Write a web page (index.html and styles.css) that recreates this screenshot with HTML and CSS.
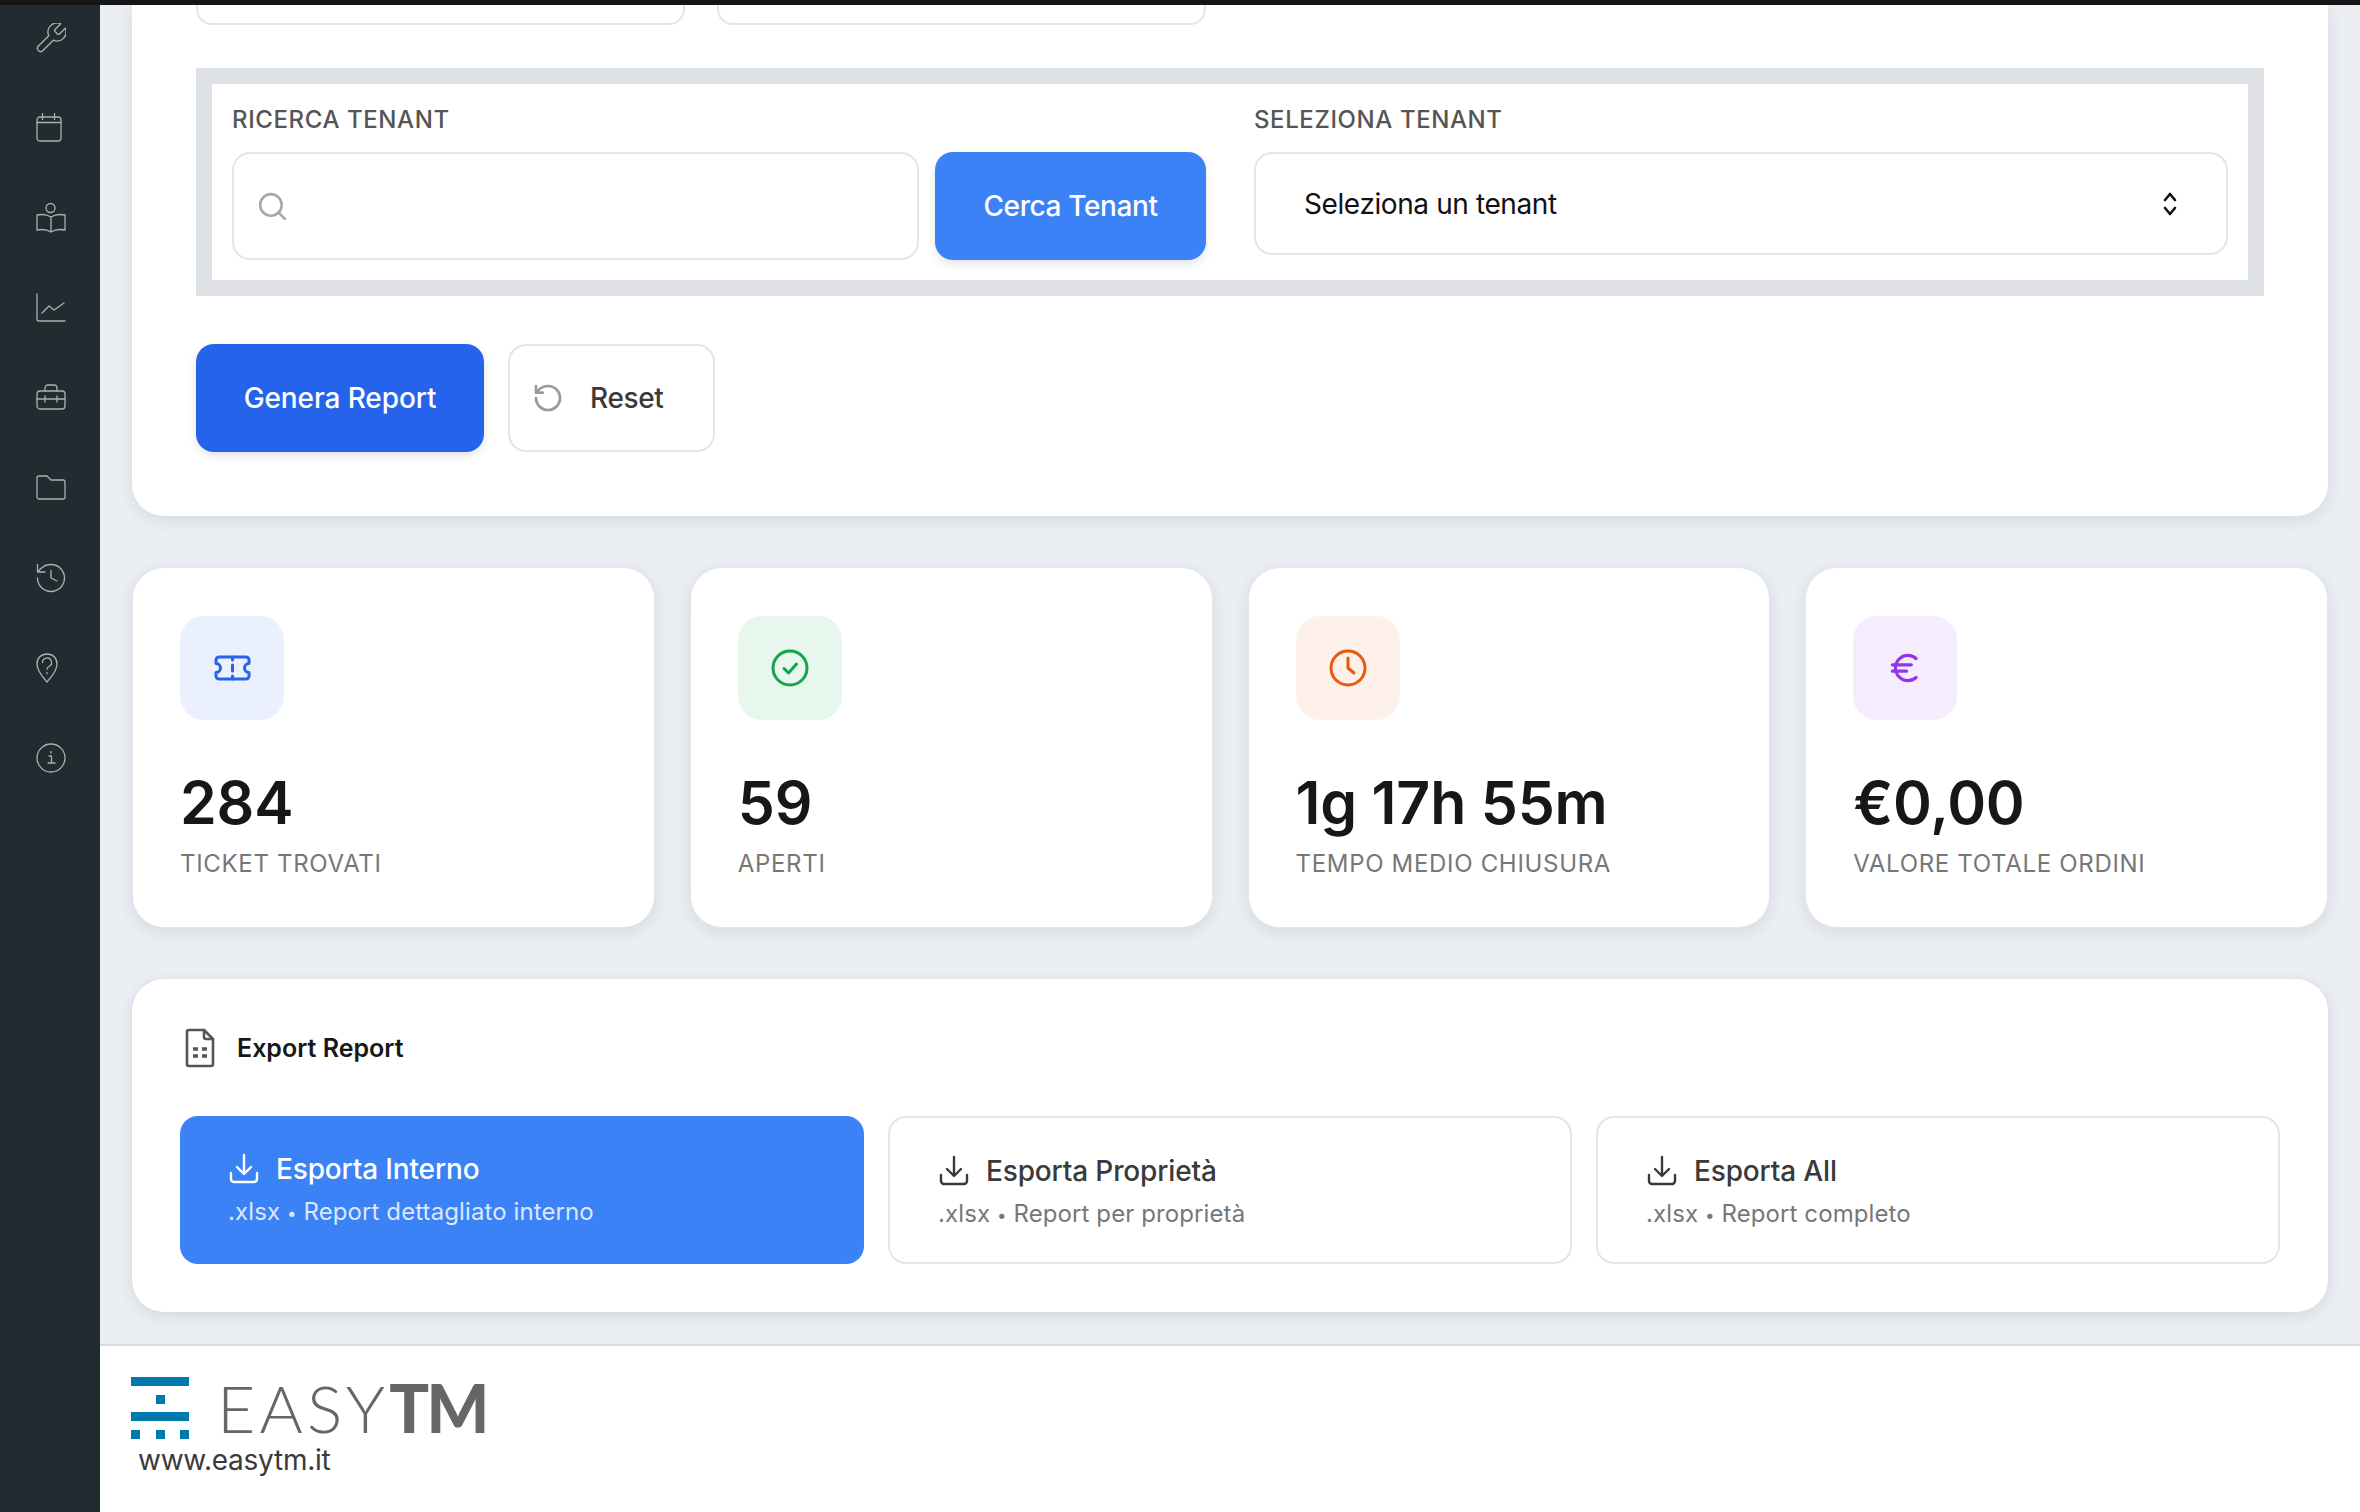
FILE: index.html
```html
<!DOCTYPE html>
<html lang="it">
<head>
	<meta charset="UTF-8">
	<title>Report Ticket</title>
	<link rel="stylesheet" href="styles.css">
</head>
<body>
	<div class="topbar"></div>
	<div class="app">
		<nav class="sidebar">
			<svg class="nav-icon" viewBox="2 2 20 20"><path d="M14.7 6.3a1 1 0 0 0 0 1.4l1.6 1.6a1 1 0 0 0 1.4 0l3.77-3.77a6 6 0 0 1-7.94 7.94l-6.91 6.91a2.12 2.12 0 0 1-3-3l6.91-6.91a6 6 0 0 1 7.94-7.94l-3.76 3.76z"/></svg>
			<svg class="nav-icon" viewBox="0 0 30 30"><rect x="1" y="4" width="24" height="24" rx="3"/><path d="M6.500 0.500v6M18.500 0.500v6M1 9.500h24"/></svg>
			<svg class="nav-icon" viewBox="0 0 30 30"><circle cx="14.500" cy="5" r="4.500"/><path d="M15 14C11 11.500 6 11 1 12v15c5-1 10-.5 14 2 4-2.500 9-3 14-2V12c-5-1-10-.5-14 2zM15 14v15"/></svg>
			<svg class="nav-icon" viewBox="0 0 30 30"><path d="M1 1v25a2 2 0 0 0 2 2h26M6 20l7-7 5 4 10-7"/></svg>
			<svg class="nav-icon" viewBox="0 0 30 30"><rect x="1" y="8" width="28" height="18" rx="3"/><path d="M9 8V5a3 3 0 0 1 3-3h6a3 3 0 0 1 3 3v3M1 16h28M9 13v6M21 13v6"/></svg>
			<svg class="nav-icon" viewBox="0 0 30 30"><path d="M1 5a2 2 0 0 1 2-2h8l4 4h12a2 2 0 0 1 2 2v15a2 2 0 0 1-2 2H3a2 2 0 0 1-2-2z"/></svg>
			<svg class="nav-icon nav-icon-wide" viewBox="2 2 20 20"><path d="M3 12a9 9 0 1 0 9-9 9.750 9.750 0 0 0-6.740 2.740L3 8M3 3v5h5M12 7v5l4 2"/></svg>
			<svg class="nav-icon" viewBox="0 0 30 30"><path d="M11 29C8 25 1 19 1 11 1 5 5 1 11 1s10 4 10 10c0 8-7 14-10 18z"/><path d="M6.500 9.500a4.500 4.500 0 1 1 6.500 4c-1.200.7-2 1.300-2 2.800M11 19.500v1"/></svg>
			<svg class="nav-icon" viewBox="0 0 30 30"><circle cx="15" cy="15" r="14"/><path d="M13 13h2.500v7M12 20h7M15 8.500v1.500"/></svg>
		</nav>
		<div class="page">
			<main class="content">
				<section class="filter-card">
					<div class="clipped-row">
						<div class="clipped-input"></div>
						<div class="clipped-input"></div>
					</div>
					<div class="tenant-box">
						<div class="tenant-group">
							<div class="field-label">Ricerca Tenant</div>
							<div class="search-row">
								<div class="search-input">
									<svg class="search-icon" viewBox="0 0 26 26"><circle cx="12" cy="12" r="10"/><path d="M19 19l6 6"/></svg>
								</div>
								<div class="btn btn-search">Cerca Tenant</div>
							</div>
						</div>
						<div class="tenant-group">
							<div class="field-label">Seleziona Tenant</div>
							<div class="select-box">
								<span>Seleziona un tenant</span>
								<svg class="select-icon" viewBox="0 0 16 24"><path d="M3 8l5-6 5 6M3 16l5 6 5-6"/></svg>
							</div>
						</div>
					</div>
					<div class="actions">
						<div class="btn btn-primary">Genera Report</div>
						<div class="btn btn-reset">
							<svg class="reset-icon" viewBox="0 0 24 24"><path d="M3 12a9 9 0 1 0 9-9 9.750 9.750 0 0 0-6.740 2.740L3 8M3 3v5h5"/></svg>
							<span>Reset</span>
						</div>
					</div>
				</section>

				<section class="stats">
					<div class="stat-card">
						<div class="stat-icon tile-blue">
							<svg class="ticket" viewBox="0 0 37 26"><path d="M5 2h27a3 3 0 0 1 3 3v3.500a4.500 4.500 0 0 0 0 9V21a3 3 0 0 1-3 3H5a3 3 0 0 1-3-3v-3.500a4.500 4.500 0 0 0 0-9V5a3 3 0 0 1 3-3z"/><path d="M18.500 2v3M18.500 10v6M18.500 21v3"/></svg>
						</div>
						<div class="stat-value">284</div>
						<div class="stat-label">Ticket trovati</div>
					</div>
					<div class="stat-card">
						<div class="stat-icon tile-green">
							<svg class="check" viewBox="0 0 38 38"><circle cx="19" cy="19" r="17"/><path d="M13 19.500l4.500 4.500 8-9"/></svg>
						</div>
						<div class="stat-value">59</div>
						<div class="stat-label">Aperti</div>
					</div>
					<div class="stat-card">
						<div class="stat-icon tile-orange">
							<svg class="clock" viewBox="0 0 38 38"><circle cx="19" cy="19" r="17"/><path d="M19 9v10l6 5"/></svg>
						</div>
						<div class="stat-value">1g 17h 55m</div>
						<div class="stat-label">Tempo medio chiusura</div>
					</div>
					<div class="stat-card">
						<div class="stat-icon tile-purple">
							<svg class="euro" viewBox="0 0 24 24"><path d="M4 10h12M4 14h9M19 6a7.700 7.700 0 0 0-5.200-2A7.900 7.900 0 0 0 6 12c0 4.400 3.500 8 7.800 8 2 0 3.800-.8 5.200-2"/></svg>
						</div>
						<div class="stat-value">€0,00</div>
						<div class="stat-label">Valore totale ordini</div>
					</div>
				</section>

				<section class="export-card">
					<div class="export-head">
						<svg class="doc-icon" viewBox="0 0 40 40"><path d="M9 2h15l9 9v25a2 2 0 0 1-2 2H9a2 2 0 0 1-2-2V4a2 2 0 0 1 2-2z"/><path d="M24 2v7a2 2 0 0 0 2 2h7"/><path class="doc-dots" d="M13 21h5M22 21h5M13 28h5M22 28h5"/></svg>
						<span class="export-title">Export Report</span>
					</div>
					<div class="export-grid">
						<div class="export-btn export-active">
							<div class="export-name">
								<svg class="dl-icon" viewBox="0 0 32 32"><path d="M16 2v18M9 14l7 7 7-7M3 20v6a3 3 0 0 0 3 3h20a3 3 0 0 0 3-3v-6"/></svg>
								<span>Esporta Interno</span>
							</div>
							<div class="export-sub">.xlsx <span class="dot">•</span> Report dettagliato interno</div>
						</div>
						<div class="export-btn">
							<div class="export-name">
								<svg class="dl-icon" viewBox="0 0 32 32"><path d="M16 2v18M9 14l7 7 7-7M3 20v6a3 3 0 0 0 3 3h20a3 3 0 0 0 3-3v-6"/></svg>
								<span>Esporta Proprietà</span>
							</div>
							<div class="export-sub">.xlsx <span class="dot">•</span> Report per proprietà</div>
						</div>
						<div class="export-btn">
							<div class="export-name">
								<svg class="dl-icon" viewBox="0 0 32 32"><path d="M16 2v18M9 14l7 7 7-7M3 20v6a3 3 0 0 0 3 3h20a3 3 0 0 0 3-3v-6"/></svg>
								<span>Esporta All</span>
							</div>
							<div class="export-sub">.xlsx <span class="dot">•</span> Report completo</div>
						</div>
					</div>
				</section>
			</main>
			<footer class="footer">
				<div class="logo">
					<svg class="logo-mark" viewBox="0 0 58 62">
						<rect x="0" y="0" width="58" height="9"/>
						<rect x="25" y="18" width="9" height="9"/>
						<rect x="0" y="35" width="58" height="9"/>
						<rect x="0" y="53" width="9" height="9"/>
						<rect x="25" y="53" width="9" height="9"/>
						<rect x="49" y="53" width="9" height="9"/>
					</svg>
					<div class="logo-text">EASY<b>TM</b></div>
				</div>
				<div class="site-url">www.easytm.it</div>
			</footer>
		</div>
	</div>
</body>
</html>
```

FILE: styles.css
```css
* {
	margin: 0;
	padding: 0;
	box-sizing: border-box;
}
html, body {
	width: 2360px;
	height: 1512px;
	overflow: hidden;
}
body {
	display: flex;
	flex-direction: column;
	font-family: Inter, "Liberation Sans", sans-serif;
	color: #111;
	background: #ebeef3;
}
svg {
	display: block;
	flex: none;
	fill: none;
	stroke-linecap: round;
	stroke-linejoin: round;
}
.topbar {
	height: 5px;
	background: #151515;
}
.app {
	flex: 1;
	display: flex;
	min-height: 0;
}

/* sidebar */
.sidebar {
	width: 100px;
	flex: none;
	display: flex;
	flex-direction: column;
	gap: 60px;
	padding: 18px 0 0 36px;
	background: #212c31;
}
.nav-icon {
	width: 30px;
	height: 30px;
	stroke: #a9b1b4;
	stroke-width: 1.3;
}
.nav-icon[viewBox="2 2 20 20"] {
	stroke-width: .9;
}

.page {
	flex: 1;
	display: flex;
	flex-direction: column;
	min-width: 0;
}
.content {
	flex: 1;
	padding: 0 32px;
}

/* filtri */
.filter-card {
	height: 511px;
	padding: 0 64px;
	background: #fff;
	border-radius: 0 0 32px 32px;
	box-shadow: 0 4px 16px rgba(30, 40, 60, .1);
}
.clipped-row {
	display: flex;
	gap: 32px;
	margin-bottom: 43px;
}
.clipped-input {
	width: 489px;
	height: 20px;
	border: 2px solid #e2e5ea;
	border-top: 0;
	border-radius: 0 0 16px 16px;
}
.tenant-box {
	display: grid;
	grid-template-columns: 1fr 1fr;
	column-gap: 48px;
	height: 228px;
	padding: 20px;
	background: #fff;
	border: 16px solid #dee1e6;
}
.field-label {
	margin-bottom: 16px;
	font-size: 24px;
	line-height: 32px;
	font-weight: 500;
	letter-spacing: .6px;
	text-transform: uppercase;
	color: #555;
}
.search-row {
	display: flex;
	gap: 16px;
}
.search-input {
	flex: 1;
	height: 108px;
	display: flex;
	align-items: center;
	padding-left: 24px;
	border: 2px solid #e2e5ea;
	border-radius: 18px;
}
.search-icon {
	width: 28px;
	height: 28px;
	stroke: #a8a8a8;
	stroke-width: 2.4;
}
.btn {
	height: 108px;
	display: flex;
	align-items: center;
	justify-content: center;
	font-size: 28px;
	font-weight: 500;
	letter-spacing: -.38px;
	border-radius: 18px;
}
.btn-search {
	width: 271px;
	color: #fff;
	background: #3b82f6;
	box-shadow: 0 4px 8px rgba(30, 40, 60, .12);
}
.select-box {
	height: 103px;
	display: flex;
	align-items: center;
	justify-content: space-between;
	padding: 0 48px;
	font-size: 28px;
	letter-spacing: -.4px;
	color: #111;
	border: 2px solid #e2e5ea;
	border-radius: 18px;
}
.select-icon {
	width: 16px;
	height: 24px;
	stroke: #111;
	stroke-width: 2.6;
}
.actions {
	display: flex;
	gap: 24px;
	margin-top: 48px;
}
.btn-primary {
	width: 288px;
	letter-spacing: -.1px;
	color: #fff;
	background: #2563eb;
	box-shadow: 0 4px 8px rgba(30, 40, 60, .12);
}
.btn-reset {
	width: 207px;
	justify-content: flex-start;
	gap: 26px;
	padding-left: 22px;
	color: #3a3a3a;
	background: #fff;
	border: 2px solid #e2e5ea;
}
.reset-icon {
	width: 32px;
	height: 32px;
	stroke: #999;
	stroke-width: 2;
}

/* statistiche */
.stats {
	display: grid;
	grid-template-columns: repeat(4, 1fr);
	gap: 35px;
	margin-top: 51px;
}
.stat-card {
	height: 361px;
	padding: 48px 47px;
	background: #fff;
	border: 1px solid #e4e7ec;
	border-radius: 32px;
	box-shadow: 0 4px 16px rgba(30, 40, 60, .1);
}
.stat-icon {
	width: 104px;
	height: 104px;
	display: flex;
	align-items: center;
	justify-content: center;
	border-radius: 24px;
}
.tile-blue { background: #eaf0fd; }
.tile-green { background: #e7f7ee; }
.tile-orange { background: #fef1e9; }
.tile-purple { background: #f5edfd; }
.ticket {
	width: 37px;
	height: 26px;
	stroke: #2563eb;
	stroke-width: 3;
}
.check {
	width: 38px;
	height: 38px;
	stroke: #16a34a;
	stroke-width: 3;
}
.clock {
	width: 38px;
	height: 38px;
	stroke: #ea580c;
	stroke-width: 3;
}
.euro {
	width: 38px;
	height: 38px;
	stroke: #9333ea;
	stroke-width: 2;
}
.stat-value {
	margin-top: 47px;
	font-size: 59px;
	line-height: 72px;
	font-weight: 600;
	letter-spacing: -.2px;
	color: #171717;
}
.stat-label {
	margin-top: 9px;
	font-size: 24px;
	line-height: 32px;
	letter-spacing: .68px;
	text-transform: uppercase;
	color: #777;
}

/* export */
.export-card {
	height: 333px;
	margin-top: 51px;
	padding: 49px 48px 48px;
	background: #fff;
	border-radius: 32px;
	box-shadow: 0 4px 16px rgba(30, 40, 60, .1), 0 0 0 1px #e6e9ee;
}
.export-head {
	display: flex;
	align-items: center;
	gap: 17px;
	margin-bottom: 48px;
}
.doc-icon {
	width: 40px;
	height: 40px;
	stroke: #555;
	stroke-width: 2.6;
}
.doc-dots {
	stroke-width: 3.4;
	stroke-linecap: butt;
}
.export-title {
	font-size: 25px;
	font-weight: 600;
	color: #171717;
}
.export-grid {
	display: grid;
	grid-template-columns: repeat(3, 1fr);
	gap: 24px;
}
.export-btn {
	height: 148px;
	padding: 32px 48px 0;
	color: #3a3a3a;
	background: #fff;
	border: 2px solid #e2e5ea;
	border-radius: 18px;
}
.export-active {
	color: #fff;
	background: #3b82f6;
	border: 0;
}
.export-name {
	display: flex;
	align-items: center;
	gap: 16px;
	font-size: 28px;
	line-height: 42px;
	font-weight: 500;
	letter-spacing: -.15px;
}
.dl-icon {
	width: 32px;
	height: 32px;
	stroke: currentColor;
	stroke-width: 2.4;
}
.export-sub {
	margin-top: 4px;
	font-size: 24px;
	line-height: 36px;
	letter-spacing: .1px;
	color: #777;
}
.export-active .export-sub {
	color: #dbe8fe;
}
.dot {
	font-size: 17px;
	vertical-align: 1px;
}

/* footer */
.footer {
	height: 168px;
	flex: none;
	padding: 31px 0 0 31px;
	background: #fff;
	border-top: 2px solid #d5d9e1;
}
.logo {
	display: flex;
	gap: 28px;
}
.logo-mark {
	width: 58px;
	height: 62px;
	fill: #0079ad;
}
.logo-text {
	font-family: Lato, "Liberation Sans", sans-serif;
	font-size: 66px;
	line-height: 62px;
	font-weight: 300;
	color: #666;
	letter-spacing: 4.2px;
}
.logo-text b {
	font-weight: 900;
	letter-spacing: -2.5px;
}
.site-url {
	margin: 3px 0 0 7px;
	font-size: 28px;
	line-height: 36px;
	letter-spacing: -.25px;
	color: #3a3a3a;
}
```
